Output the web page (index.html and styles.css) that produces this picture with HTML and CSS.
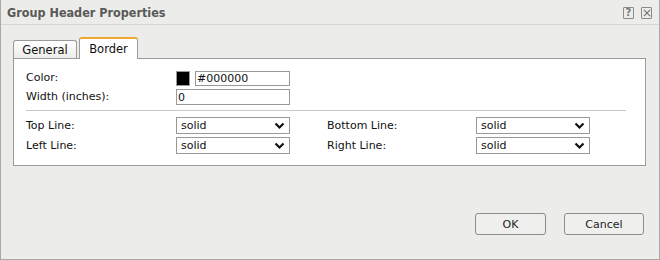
FILE: index.html
```html
<!DOCTYPE html>
<html>
  <head>
    <meta charset="UTF-8" />
    <title>Group Header Properties</title>
    <link rel="stylesheet" href="styles.css">
  </head>
  <body>
    <div class="dialog">
      <div class="titlebar">
        <span class="title">Group Header Properties</span>
        <span class="tool-icons">
          <span class="tool-btn">?</span>
          <span class="tool-btn">
            <svg width="9" height="9" viewBox="0 0 9 9"><path d="M1 1L8 8M8 1L1 8" stroke="#777" stroke-width="1.4" /></svg>
          </span>
        </span>
      </div>

      <div class="body">
        <div class="tabs">
          <div class="tab">General</div>
          <div class="tab active">Border</div>
        </div>
        <div class="panel">
          <div class="grid top">
            <label>Color:</label>
            <div class="color-field">
              <span class="swatch"></span>
              <input type="text" value="#000000" />
            </div>
            <label>Width (inches):</label>
            <input type="text" class="wide" value="0" />
          </div>
          <div class="sep"></div>
          <div class="grid lines">
            <label>Top Line:</label>
            <div class="select"><span>solid</span><svg width="11" height="8" viewBox="0 0 11 8"><path d="M1.5 1.5L5.5 5.5L9.5 1.5" fill="none" stroke="#111" stroke-width="2.2" /></svg></div>
            <label class="col2">Bottom Line:</label>
            <div class="select"><span>solid</span><svg width="11" height="8" viewBox="0 0 11 8"><path d="M1.5 1.5L5.5 5.5L9.5 1.5" fill="none" stroke="#111" stroke-width="2.2" /></svg></div>
            <label>Left Line:</label>
            <div class="select"><span>solid</span><svg width="11" height="8" viewBox="0 0 11 8"><path d="M1.5 1.5L5.5 5.5L9.5 1.5" fill="none" stroke="#111" stroke-width="2.2" /></svg></div>
            <label class="col2">Right Line:</label>
            <div class="select"><span>solid</span><svg width="11" height="8" viewBox="0 0 11 8"><path d="M1.5 1.5L5.5 5.5L9.5 1.5" fill="none" stroke="#111" stroke-width="2.2" /></svg></div>
          </div>
        </div>
      </div>

      <div class="footer">
        <button class="ok">OK</button>
        <button class="cancel">Cancel</button>
      </div>
    </div>
  </body>
</html>
```

FILE: styles.css
```css
body {
  margin: 0;
  font-family: "DejaVu Sans", Verdana, sans-serif;
  font-size: 11px;
  color: #111;
}
.dialog {
  width: 660px;
  height: 260px;
  box-sizing: border-box;
  border: 1px solid #a9a9a9;
  border-top: none;
  background-color: #ecedea;
  display: flex;
  flex-direction: column;
}
.titlebar {
  height: 24px;
  display: flex;
  align-items: center;
  justify-content: space-between;
  padding: 0 7px 0 6px;
  border-bottom: 1px solid #d6d7d4;
}
.title {
  font-family: "DejaVu Sans Condensed", "DejaVu Sans", sans-serif;
  font-weight: bold;
  font-size: 12.5px;
  color: #595959;
}
.tool-icons {
  display: flex;
  gap: 7px;
  margin-top: 1px;
}
.tool-btn {
  width: 9px;
  height: 10px;
  border: 1px solid #8a8a8a;
  border-radius: 1px;
  display: flex;
  align-items: center;
  justify-content: center;
  font-size: 10px;
  font-weight: bold;
  color: #777;
  line-height: 1;
}
.tool-btn svg {
  width: 8px;
  height: 8px;
}
.body {
  padding: 12px 13px 0 12px;
}
.tabs {
  display: flex;
  align-items: flex-end;
  gap: 1px;
  height: 21px;
}
.tab {
  box-sizing: border-box;
  height: 18px;
  width: 64px;
  border: 1px solid #9a9a9a;
  border-bottom: none;
  border-radius: 3px 3px 0 0;
  background: linear-gradient(#ffffff, #ecedea);
  display: flex;
  align-items: center;
  justify-content: center;
  font-size: 11.5px;
}
.tab.active {
  height: 22px;
  width: 59px;
  margin-left: 1px;
  margin-bottom: -1px;
  background: #fff;
  border-top: 2px solid #f0a830;
}
.panel {
  height: 108px;
  box-sizing: border-box;
  border: 1px solid #9a9a9a;
  background-color: #fff;
  padding: 12px 0 0 12px;
}
.grid {
  display: grid;
  grid-template-columns: 150px 114px 37px 149px 114px;
  align-items: center;
}
.grid label {
  grid-column: 1;
}
.grid label.col2 {
  grid-column: 4;
}
.top {
  row-gap: 3px;
}
.top > * {
  height: 15px;
}
.color-field {
  display: flex;
  gap: 5px;
}
.swatch {
  width: 12px;
  height: 13px;
  background: #000;
  border: 1px solid #999;
}
input[type="text"] {
  box-sizing: border-box;
  height: 15px;
  width: 95px;
  border: 1px solid #999;
  padding: 0 1px;
  margin: 0;
  font-family: inherit;
  font-size: 11px;
  color: #111;
}
input.wide {
  width: 114px;
  height: 16px;
}
.sep {
  height: 1px;
  background-color: #c6cad0;
  margin: 5px 19px 6px 0;
}
.lines {
  row-gap: 3px;
}
.select {
  grid-column: 2;
  box-sizing: border-box;
  height: 17px;
  border: 1px solid #999;
  display: flex;
  align-items: center;
  justify-content: space-between;
  padding: 0 4px 0 4px;
}
.lines .col2 + .select {
  grid-column: 5;
}
.footer {
  display: flex;
  justify-content: flex-end;
  gap: 18px;
  padding: 47px 15px 0 0;
}
button {
  box-sizing: border-box;
  height: 22px;
  border: 1px solid #8c8c8c;
  border-radius: 3px;
  background-color: #efefed;
  font-family: "DejaVu Sans", Verdana, sans-serif;
  font-size: 11px;
  color: #222;
  padding: 0;
}
.ok {
  width: 71px;
}
.cancel {
  width: 80px;
}
```
